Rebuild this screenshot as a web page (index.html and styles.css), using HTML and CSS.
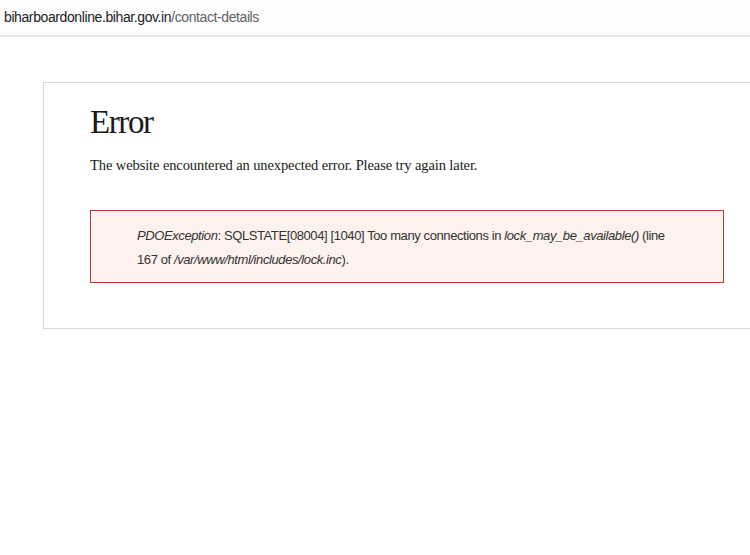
FILE: index.html
```html
<!DOCTYPE html>
<html>
<head>
<meta charset="utf-8">
<link rel="stylesheet" href="styles.css">
</head>
<body>
<div class="urlbar"><span class="host">biharboardonline.bihar.gov.in</span><span class="path">/contact-details</span></div>
<div class="page">
  <div class="card">
    <h1 class="title">Error</h1>
    <p class="lead">The website encountered an unexpected error. Please try again later.</p>
    <div class="errbox">
      <p class="msg"><em>PDOException</em>: SQLSTATE[08004] [1040] Too many connections in <em>lock_may_be_available()</em> (line 167 of <em>/var/www/html/includes/lock.inc</em>).</p>
    </div>
  </div>
</div>
</body>
</html>
```
FILE: styles.css
```css
html, body {
  margin: 0;
  padding: 0;
  background: #fff;
  width: 750px;
  height: 555px;
  overflow: hidden;
}
.urlbar {
  height: 37px;
  box-sizing: border-box;
  padding: 9px 0 0 4px;
  font-family: "Liberation Sans", Arial, sans-serif;
  font-size: 14px;
  letter-spacing: -0.4px;
  background: #fdfdfd;
  border-bottom: 2px solid #e6e6e6;
}
.host { color: #202124; }
.path { color: #5f6368; }
.page {
  padding: 45px 0 0 43px;
}
.card {
  box-sizing: border-box;
  width: 740px;
  height: 247px;
  border: 1px solid #d8d8d8;
  border-right: none;
  padding: 19px 0 0 46px;
}
.title {
  margin: 0;
  font-family: "Liberation Serif", "Times New Roman", serif;
  font-weight: normal;
  font-size: 33px;
  line-height: 40px;
  color: #1a1a1a;
  letter-spacing: -1.4px;
}
.lead {
  margin: 13px 0 0;
  font-family: "Liberation Serif", "Times New Roman", serif;
  font-size: 14.5px;
  line-height: 20px;
  color: #1a1a1a;
  letter-spacing: -0.1px;
}
.errbox {
  margin-top: 35px;
  width: 634px;
  height: 73px;
  box-sizing: border-box;
  border: 1px solid #b03a36;
  background: #fdf2ee;
  padding: 13px 40px 0 46px;
}
.msg {
  margin: 0;
  font-family: "Liberation Sans", Arial, sans-serif;
  font-size: 13px;
  line-height: 24px;
  color: #333;
  letter-spacing: -0.4px;
}
.msg em { font-style: italic; }
```
